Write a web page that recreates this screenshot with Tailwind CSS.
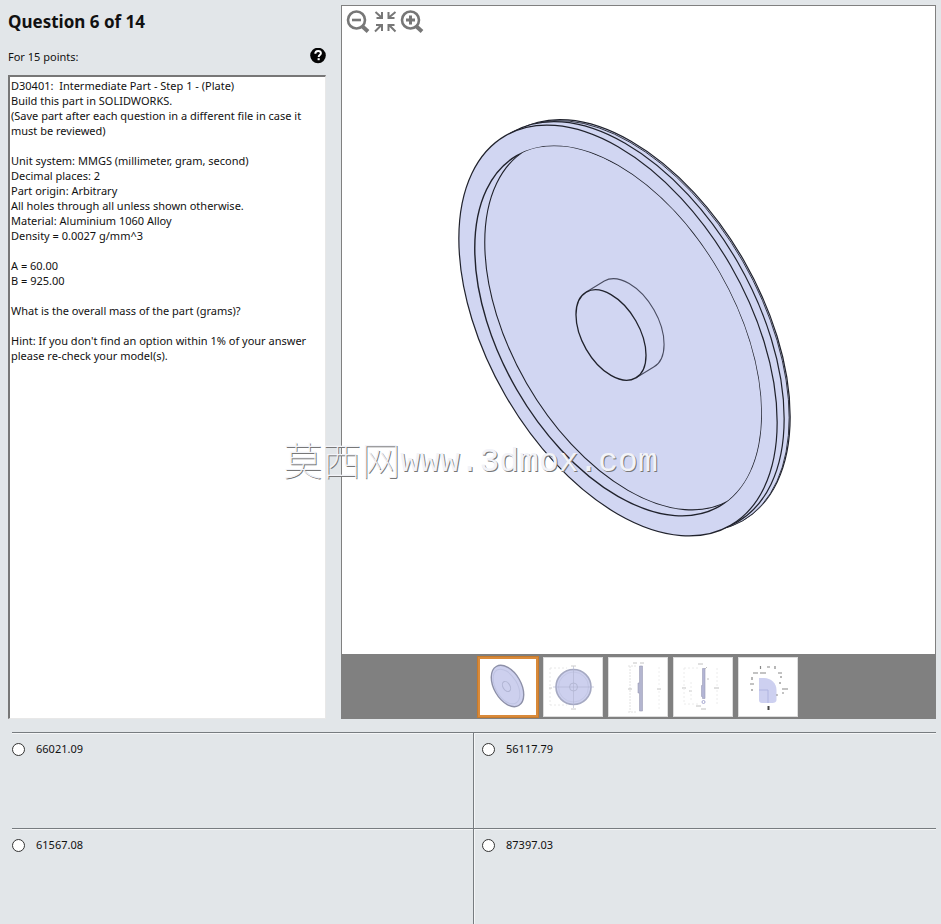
<!DOCTYPE html>
<html lang="en">
<head>
    <meta charset="UTF-8">
    <meta name="viewport" content="width=device-width, initial-scale=1.0">
    <title>Question 6 of 14</title>
    <script src="https://cdn.jsdelivr.net/npm/@tailwindcss/browser@4"></script>
</head>
<body class="relative bg-[#e2e6e9] text-[#111] text-[11px] leading-[15px] font-['Noto_Sans','Noto_Sans_CJK_SC',sans-serif] flex flex-col min-h-screen">
    <main class="flex flex-1 gap-[15px] pl-2 pr-[5px] pt-[5px]">
        <section class="w-[318px] shrink-0 flex flex-col">
            <h1 class="text-[17px] leading-6 font-bold mt-[5px]">Question 6 of 14</h1>
            <div class="flex items-center justify-between mt-3 h-5">
                <p>For 15 points:</p>
                <button type="button" aria-label="Help" class="w-4 h-4">
                    <svg viewBox="0 0 16 16" class="w-4 h-4">
                        <circle cx="8" cy="7.500" r="7.800" fill="#050505"/>
                        <path d="M5.300 5.700c0-1.900 1.200-2.800 2.800-2.800s2.800.9 2.800 2.400c0 1.700-2.200 1.800-2.200 3.600" fill="none" stroke="#fff" stroke-width="2"/>
                        <rect x="7.600" y="10.200" width="2.100" height="2" fill="#fff"/>
                    </svg>
                </button>
            </div>
            <textarea readonly aria-label="Question text" class="flex-1 mt-[9px] bg-white border-t-2 border-l-2 border-t-[#777] border-l-[#777] border-b border-r border-b-[#e8e8e8] border-r-[#e8e8e8] pl-px pt-px resize-none outline-none">D30401:  Intermediate Part - Step 1 - (Plate)
Build this part in SOLIDWORKS.
(Save part after each question in a different file in case it must be reviewed)

Unit system: MMGS (millimeter, gram, second)
Decimal places: 2
Part origin: Arbitrary
All holes through all unless shown otherwise.
Material: Aluminium 1060 Alloy
Density = 0.0027 g/mm^3

A = 60.00
B = 925.00

What is the overall mass of the part (grams)?

Hint: If you don't find an option within 1% of your answer please re-check your model(s).</textarea>
        </section>

        <section class="relative flex-1 flex flex-col bg-white border border-[#808080]">
            <div class="absolute top-[3px] left-1 flex gap-[3px]">
                <button type="button" aria-label="Zoom out">
                    <svg viewBox="0 0 24 24" class="w-6 h-6" fill="none" stroke="#777">
                        <circle cx="10.500" cy="11" r="8.500" stroke-width="2.600"/>
                        <path d="M6 11h9" stroke-width="2.600"/>
                        <path d="M16.500 17.500l5.500 5" stroke-width="4"/>
                    </svg>
                </button>
                <button type="button" aria-label="Fit to window">
                    <svg viewBox="0 0 24 24" class="w-6 h-6" fill="none" stroke="#777" stroke-width="2">
                        <path d="M2.500 3l5.500 5M9 3v6H3.500M22.500 3l-6 5M15.500 3v6h6M2 22.500l6-6M3 16h6v6M22.500 22.500l-6-6M21.500 16h-6v6"/>
                    </svg>
                </button>
                <button type="button" aria-label="Zoom in">
                    <svg viewBox="0 0 24 24" class="w-6 h-6" fill="none" stroke="#777">
                        <circle cx="10.500" cy="11" r="8.500" stroke-width="2.600"/>
                        <path d="M6 11h9M10.500 6.500v9" stroke-width="3"/>
                        <path d="M16.500 17.500l5.500 5" stroke-width="4"/>
                    </svg>
                </button>
            </div>

            <!-- isometric plate -->
            <div class="flex-1 min-h-0">
                <svg viewBox="342 6 593 648" class="w-full h-full" fill="#d1d6f2" stroke="#20222c" stroke-width="1.200">
                    <defs>
                        <clipPath id="recess"><ellipse cx="618" cy="331" rx="202.500" ry="117" transform="rotate(60 618 331)"/></clipPath>
                    </defs>
                    <ellipse cx="631" cy="325" rx="225" ry="130" transform="rotate(60 631 325)"/>
                    <ellipse cx="630" cy="326" rx="225" ry="130" transform="rotate(60 630 326)" stroke-width=".8"/>
                    <ellipse cx="625" cy="327" rx="225" ry="130" transform="rotate(60 625 327)"/>
                    <ellipse cx="618" cy="330.500" rx="225" ry="130" transform="rotate(60 618 330.500)"/>
                    <ellipse cx="618" cy="331" rx="202.500" ry="117" transform="rotate(60 618 331)" stroke-width="1.400"/>
                    <g clip-path="url(#recess)">
                        <ellipse cx="628" cy="325" rx="202.500" ry="117" transform="rotate(60 628 325)" stroke-width="1.100"/>
                    </g>
                    <path d="M586.300 292L604.300 281A49.500 28.600 60 0 1 653.700 367L635.700 378" stroke="#4a4d62" stroke-width="1.100"/>
                    <ellipse cx="611" cy="335" rx="49.500" ry="28.600" transform="rotate(60 611 335)" stroke-width="1.300"/>
                </svg>
            </div>

            <nav class="bg-[#808080] h-16 flex items-center justify-center gap-[5px] pr-px pt-px" aria-label="Views">
                <button type="button" aria-label="Isometric view" class="w-[60px] h-[60px] bg-white ring-1 ring-[#c77a2b] border-2 border-[#d98a3a]">
                    <svg viewBox="0 0 56 56" class="w-full h-full" fill="#cdd0ee" stroke="#8d90a8">
                        <ellipse cx="27.500" cy="27" rx="22.500" ry="13.500" transform="rotate(60 27.500 27)" stroke-width="1.400"/>
                        <ellipse cx="26.500" cy="27.500" rx="19" ry="10.800" transform="rotate(60 26.500 27.500)" stroke="#bfc3e2"/>
                        <ellipse cx="26.500" cy="27.500" rx="5.500" ry="3.500" transform="rotate(60 26.500 27.500)" stroke="#b0b4d2"/>
                    </svg>
                </button>
                <button type="button" aria-label="Front view" class="w-[60px] h-[60px] bg-white border border-[#ddd]">
                    <svg viewBox="0 0 58 58" class="w-full h-full" fill="none" stroke="#a5a9c2">
                        <circle cx="29.500" cy="29" r="17.500" fill="#cdd0ee" stroke-width="1.600"/>
                        <circle cx="29.500" cy="29" r="15" stroke="#c3c7e5"/>
                        <circle cx="29.500" cy="29" r="4" stroke="#b4b8d4"/>
                        <path d="M29.500 8v42M9 29h41" stroke="#b0b4d0" stroke-width=".6"/>
                        <path d="M6 10h17M6 47h17M6 10v37" stroke="#e8e8e8" stroke-dasharray="2 2"/>
                        <path d="M5 30h3M27 8h5M27 51h5" stroke="#ccc"/>
                    </svg>
                </button>
                <button type="button" aria-label="Side view" class="w-[60px] h-[60px] bg-white border border-[#ddd]">
                    <svg viewBox="0 0 58 58" class="w-full h-full" fill="none">
                        <path d="M30.500 8h3v45h-3V35h-1.500V25h1.500z" fill="#b3b5cf" stroke="#9a9cb5" stroke-width=".6"/>
                        <path d="M21 8v46M19 8h8M19 54h8" stroke="#e2e2e2" stroke-dasharray="2 1"/>
                        <path d="M24 5h4M31 5h4M19 31h4M48 31h4" stroke="#c4c4c4"/>
                        <path d="M50 9v20M50 33v20" stroke="#eee" stroke-dasharray="2 2"/>
                    </svg>
                </button>
                <button type="button" aria-label="Section view" class="w-[60px] h-[60px] bg-white border border-[#ddd]">
                    <svg viewBox="0 0 58 58" class="w-full h-full" fill="none">
                        <path d="M28.500 10.500h2.500v30h-2.500v-2h-1v-11h1z" fill="#b3b5d5" stroke="#9a9cb5" stroke-width=".6"/>
                        <path d="M24 6h5M33 9l-2 2M33 21h2M8 30h4M15 33h3M40 30h5M22 48h5M27 51h5" stroke="#c0c0c0"/>
                        <path d="M10 10v36M10 10h15M10 46h15M43 10v18M43 32v14M17 24v18" stroke="#ececec" stroke-dasharray="2 2"/>
                        <circle cx="29.500" cy="44" r="1.500" stroke="#a6a8d0"/>
                    </svg>
                </button>
                <button type="button" aria-label="Detail view" class="w-[60px] h-[60px] bg-white border border-[#ddd]">
                    <svg viewBox="0 0 58 58" class="w-full h-full" fill="none">
                        <path d="M20 20h5c7 0 12.500 5 12.500 12v10c0 2-2 3-4 3H23c-2 0-3-1-3-3z" fill="#cdd0f0"/>
                        <path d="M20 32h9v13" stroke="#afb4e0"/>
                        <path d="M21.500 8v3M28 9h3M36 8v3M14 15h5M21 15h6M39 15h4M13 19v3M11 26h4M13 31v2M42 18v2M41 24v2M43 31h6M43 35h2M37 37h2" stroke="#888" stroke-width="1.200"/>
                        <path d="M29.500 48v4" stroke="#444" stroke-width="2"/>
                    </svg>
                </button>
            </nav>
        </section>
    </main>

    <form class="grid grid-cols-2 auto-rows-[96px] ml-3 mr-[5px] mt-[13px]">
        <div class="border-t border-r border-[#777c80] shadow-[inset_0_1px_#f5f6f7]">
            <label class="flex items-start gap-[11px] mt-2"><input type="radio" name="answer" class="appearance-none w-[13px] h-[13px] mt-[2px] rounded-full border border-[#333] bg-white">66021.09</label>
        </div>
        <div class="border-t border-[#777c80] shadow-[inset_1px_1px_#f5f6f7] pl-2">
            <label class="flex items-start gap-[11px] mt-2"><input type="radio" name="answer" class="appearance-none w-[13px] h-[13px] mt-[2px] rounded-full border border-[#333] bg-white">56117.79</label>
        </div>
        <div class="border-t border-r border-[#777c80] shadow-[inset_0_1px_#f5f6f7]">
            <label class="flex items-start gap-[11px] mt-2"><input type="radio" name="answer" class="appearance-none w-[13px] h-[13px] mt-[2px] rounded-full border border-[#333] bg-white">61567.08</label>
        </div>
        <div class="border-t border-[#777c80] shadow-[inset_1px_1px_#f5f6f7] pl-2">
            <label class="flex items-start gap-[11px] mt-2"><input type="radio" name="answer" class="appearance-none w-[13px] h-[13px] mt-[2px] rounded-full border border-[#333] bg-white">87397.03</label>
        </div>
    </form>

    <!-- watermark -->
    <div class="absolute inset-x-0 top-[440px] flex justify-center items-center h-10 whitespace-nowrap text-[#f2f3f8] [text-shadow:1px_1px_0_#777] pointer-events-none">
        <span class="text-[39px] pb-1 font-thin font-['Noto_Sans_CJK_SC',sans-serif]">莫西网</span><span class="text-[33px] pt-1 font-['Liberation_Mono',monospace]">www.3dmox.com</span>
    </div>
</body>
</html>
